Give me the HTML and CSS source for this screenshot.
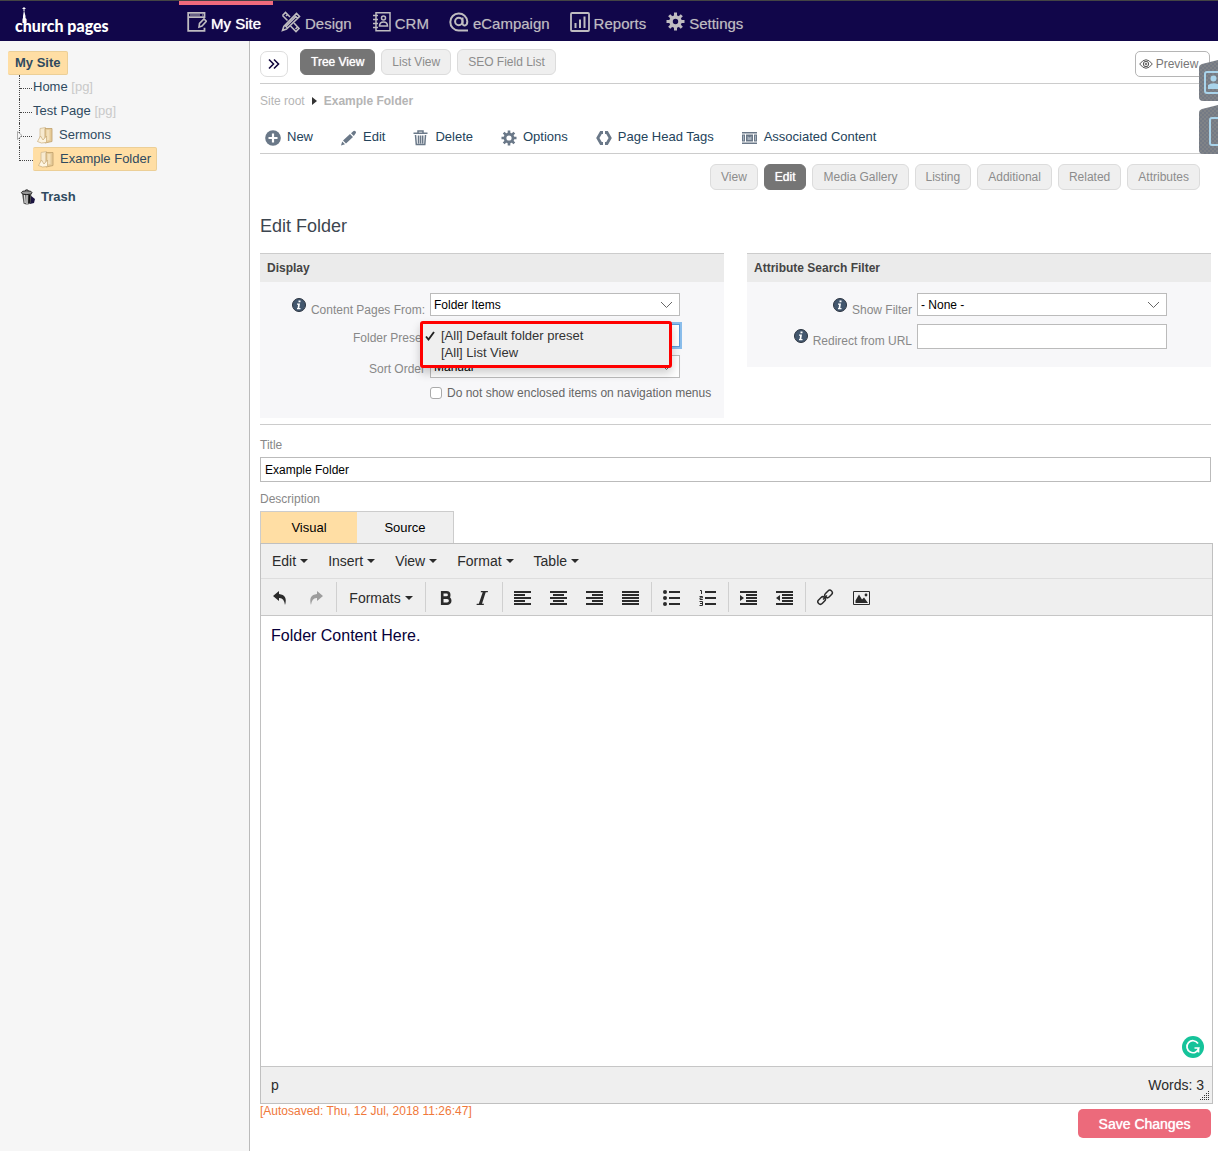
FILE: index.html
```html
<!DOCTYPE html>
<html lang="en">
<head>
<meta charset="utf-8">
<meta name="viewport" content="width=device-width, initial-scale=1">
<title>Edit Folder - Church Pages</title>
<link rel="stylesheet" href="styles.css">
</head>
<body>
<header class="topbar">
  <a class="logo" href="#">
    <svg class="steeple" width="8" height="16" viewBox="0 0 8 16"><path d="M4 0v4M2.500 1.500h3" stroke="#fff" stroke-width="1"/><path d="M4 3l1.500 6v2l1 1v4h-4v-4l.5-1V9z" fill="#fff"/></svg>
    church pages
  </a>
  <nav class="nav">
    <a class="nav-item active" href="#">
      <svg width="20" height="22" viewBox="0 0 20 22" fill="none" stroke="currentColor" stroke-width="1.800"><path d="M17.500 7V1.800H1.200v18h16.300v-3M1.200 6.200h16.300"/><path d="M3 4h10M15 4h1" stroke-width="1"/><path d="M12 16l.5-3.500L17 8l2.300 2.300L15 15z" stroke-width="1.600"/></svg>
      My Site</a>
    <a class="nav-item" href="#">
      <svg width="20" height="22" viewBox="0 0 20 22" fill="none" stroke="currentColor" stroke-width="1.600"><path d="M1.500 4.500l3-3 4.500 4.500M13 12l5 5.500-3 3L9.500 15M6.500 9.500l-5-5M5 5l1.500-1.500"/><path d="M1.500 19.500l1.300-4L15.500 2.500l3 3L5.500 18zM4 14.500l3 3M13.500 4.500l3 3M14.500 18l2-2M4.500 16l11-11"/></svg>
      Design</a>
    <a class="nav-item" href="#">
      <svg width="19" height="22" viewBox="0 0 19 22" fill="none" stroke="currentColor" stroke-width="1.500"><path d="M4 1.700h14v18H4z"/><path d="M1 4.500h5M1 8.500h5M1 12.500h5M1 16.500h5"/><circle cx="11.500" cy="7" r="2"/><path d="M7.500 15c0-5.500 8-5.500 8 0z"/></svg>
      CRM</a>
    <a class="nav-item" href="#">
      <svg width="20" height="22" viewBox="0 0 20 22" fill="none" stroke="currentColor" stroke-width="2"><path d="M19 19.500H9.500A8.500 8.500 0 1 1 18.300 10.500c0 5-4.800 4.800-4.800 2V6.500"/><circle cx="9.800" cy="10.500" r="3.700"/></svg>
      eCampaign</a>
    <a class="nav-item" href="#">
      <svg width="20" height="22" viewBox="0 0 20 22" fill="none" stroke="currentColor" stroke-width="1.800"><rect x="1" y="2" width="18" height="18" rx="1"/><path d="M5.500 17v-5M10 17V8.500M14.500 17V5.500" stroke-width="2"/></svg>
      Reports</a>
    <a class="nav-item" href="#">
      <svg width="19" height="22" viewBox="0 0 19 22" fill="none" stroke="currentColor"><circle cx="9.500" cy="10.500" r="4.500" stroke-width="3.600"/><path d="M9.500 1.500v4M9.500 15.500v4M.5 10.500h4M14.500 10.500h4M3.200 4.200L6 7M13 14l2.800 2.800M15.800 4.200L13 7M6 14l-2.800 2.800" stroke-width="3"/></svg>
      Settings</a>
  </nav>
</header>

<div class="page">
  <aside class="sidebar">
    <a class="node node-root selected" href="#">My Site</a>
    <ul class="tree">
      <li><a class="node" href="#">Home <span class="kind">[pg]</span></a></li>
      <li><a class="node" href="#">Test Page <span class="kind">[pg]</span></a></li>
      <li>
        <svg class="expander" width="6" height="9" viewBox="0 0 6 9"><path d="M.5.500L5 4.500.500 8.500z" fill="#f6f6f6" stroke="#aaa"/></svg>
        <a class="node node-folder" href="#"><svg width="17" height="17" viewBox="0 0 17 17"><path d="M3 1.500L8.500.500v12L3 14z" fill="#f7ead0" stroke="#d3bb90" stroke-width=".8"/><path d="M8 1.500h7v13l-7 1.500z" fill="#e6cb98" stroke="#bfa06a" stroke-width=".8"/><path d="M9.500 3h3v10l-3 .5z" fill="#f3e0ba"/><path d="M3.500 9L.5 14.500l4 1.500 5-.5V9L6 13z" fill="#fdf5e2" stroke="#c9ab77" stroke-width=".7"/></svg>Sermons</a>
      </li>
      <li>
        <a class="node node-folder selected" href="#"><svg width="17" height="17" viewBox="0 0 17 17"><path d="M3 1.500L8.500.500v12L3 14z" fill="#f7ead0" stroke="#d3bb90" stroke-width=".8"/><path d="M8 1.500h7v13l-7 1.500z" fill="#e6cb98" stroke="#bfa06a" stroke-width=".8"/><path d="M9.500 3h3v10l-3 .5z" fill="#f3e0ba"/><path d="M3.500 9L.5 14.500l4 1.500 5-.5V9L6 13z" fill="#fdf5e2" stroke="#c9ab77" stroke-width=".7"/></svg>Example Folder</a>
      </li>
    </ul>
    <a class="trash" href="#"><svg width="16" height="16" viewBox="0 0 16 16"><path d="M10 6l5 4-1 4-4 1z" fill="#1b1440"/><path d="M2 4l1.500 10.500q3.500 2 7 0L11.500 4z" fill="#555"/><path d="M4.500 6l.7 8M7 6v9" stroke="#ddd" stroke-width="1.300"/><path d="M9.500 6L9 14" stroke="#111" stroke-width="1.500"/><ellipse cx="6.700" cy="3.700" rx="5.300" ry="1.900" fill="#999" stroke="#222"/><path d="M5 1.500q2-1.500 3.500 0" fill="none" stroke="#222"/></svg>Trash</a>
  </aside>

  <main class="main">
    <div class="viewbar">
      <button class="box-btn expand" type="button" aria-label="Expand panel"><svg width="12" height="12" viewBox="0 0 12 12" fill="none" stroke="#11063c" stroke-width="1.600"><path d="M1 1.500L5.500 6 1 10.500M6 1.500L10.500 6 6 10.500"/></svg></button>
      <div class="pills">
        <button class="pill current" type="button">Tree View</button>
        <button class="pill" type="button">List View</button>
        <button class="pill" type="button">SEO Field List</button>
      </div>
      <button class="box-btn preview" type="button"><svg width="14" height="10" viewBox="0 0 14 10" fill="none" stroke="#555"><path d="M.7 5Q7-3.500 13.300 5 7 13.500.700 5z"/><circle cx="7" cy="5" r="2.700"/><circle cx="7" cy="5" r=".9"/></svg>Preview</button>
    </div>

    <nav class="crumbs" aria-label="Breadcrumb">
      <a href="#">Site root</a>
      <svg width="5" height="8" viewBox="0 0 5 8"><path d="M0 0l5 4-5 4z" fill="#333"/></svg>
      <a class="here" href="#">Example Folder</a>
    </nav>

    <div class="actions">
      <a href="#"><svg width="16" height="16" viewBox="0 0 16 16"><circle cx="8" cy="8" r="7.800" fill="#6a7888"/><path d="M8 3.500v9M3.500 8h9" stroke="#fff" stroke-width="2.200"/></svg>New</a>
      <a href="#"><svg width="16" height="16" viewBox="0 0 16 16" fill="#6a7888"><path d="M0 15.500l1.200-4 2.800 2.800zM2 10.500L9 4l3 3-7 6.500zM10 3.200L12.500 1q1-.7 2 .2t.2 2L12.800 6z"/></svg>Edit</a>
      <a href="#"><svg width="16" height="16" viewBox="0 0 16 16" fill="none" stroke="#6a7888" stroke-width="1.500"><path d="M.5 3.200h14M5 3V1h5v2M2.500 5l.8 9.500h8.500L12.500 5M5.500 5.500v8M7.600 5.500v8M9.700 5.500v8"/></svg>Delete</a>
      <a href="#"><svg width="16" height="16" viewBox="0 0 16 16" fill="none" stroke="#6a7888"><circle cx="8" cy="8" r="4" stroke-width="2.800"/><path d="M8 .5v3M8 12.500v3M.5 8h3M12.500 8h3M2.700 2.700l2.200 2.200M11.100 11.100l2.200 2.200M13.300 2.700l-2.200 2.200M4.900 11.100l-2.200 2.200" stroke-width="2.600"/></svg>Options</a>
      <a href="#"><svg width="16" height="16" viewBox="0 0 16 16" fill="none" stroke="#6a7888" stroke-width="2.800"><path d="M7 2.500H5L1.800 8 5 13.500h2M9 2.500h2L14.200 8 11 13.500H9"/></svg>Page Head Tags</a>
      <a href="#"><svg width="16" height="16" viewBox="0 0 16 16" fill="#6a7888"><path d="M0 2h15v1.500H0zM0 12.500h15V14H0zM0 4.500h3v7H0zM12 4.500h3v7h-3zM4 4.500h7v7H4z"/><path d="M5.500 6l2 1.500L9.500 6v4h-4zM1 5.500h1v5H1zM13 5.500h1v5h-1z" fill="#a9b3be"/></svg>Associated Content</a>
    </div>

    <div class="pills subtabs">
      <button class="pill" type="button">View</button>
      <button class="pill current" type="button">Edit</button>
      <button class="pill" type="button">Media Gallery</button>
      <button class="pill" type="button">Listing</button>
      <button class="pill" type="button">Additional</button>
      <button class="pill" type="button">Related</button>
      <button class="pill" type="button">Attributes</button>
    </div>

    <h1 class="heading">Edit Folder</h1>

    <div class="panels">
      <section class="panel">
        <h2>Display</h2>
        <div class="fields">
          <div class="field">
            <label class="with-info" for="pages-from"><svg width="14" height="14" viewBox="0 0 14 14"><circle cx="7" cy="7" r="6.500" fill="#43576e" stroke="#2c3440"/><path d="M6.500 2.500h2v1.800h-2zM5 5.500h3L7.300 10h1.200v1.200H5V10h.6l.5-3.200H5z" fill="#fff"/></svg><span>Content Pages From:</span></label>
            <div class="select"><select id="pages-from"><option>Folder Items</option></select><svg width="13" height="8" viewBox="0 0 13 8"><path d="M1 1l5.500 5.500L12 1" fill="none" stroke="#666"/></svg></div>
          </div>
          <div class="field">
            <label for="preset"><span>Folder Preset</span></label>
            <div class="select open"><select id="preset"><option>[All] Default folder preset</option><option>[All] List View</option></select><svg width="13" height="8" viewBox="0 0 13 8"><path d="M1 1l5.500 5.500L12 1" fill="none" stroke="#666"/></svg>
              <ul class="menu" role="listbox" aria-label="Folder Preset">
                <li role="option" aria-selected="true"><svg width="10" height="10" viewBox="0 0 10 10"><path d="M1 5.500L3.500 8.500 9 1" fill="none" stroke="#222" stroke-width="1.900"/></svg>[All] Default folder preset</li>
                <li role="option" aria-selected="false">[All] List View</li>
              </ul>
            </div>
          </div>
          <div class="field">
            <label for="sort"><span>Sort Order</span></label>
            <div class="select"><select id="sort"><option>Manual</option></select><svg width="13" height="8" viewBox="0 0 13 8"><path d="M1 1l5.500 5.500L12 1" fill="none" stroke="#666"/></svg></div>
          </div>
          <label class="check"><input type="checkbox">Do not show enclosed items on navigation menus</label>
        </div>
      </section>

      <section class="panel">
        <h2>Attribute Search Filter</h2>
        <div class="fields">
          <div class="field">
            <label class="with-info" for="filter"><svg width="14" height="14" viewBox="0 0 14 14"><circle cx="7" cy="7" r="6.500" fill="#43576e" stroke="#2c3440"/><path d="M6.500 2.500h2v1.800h-2zM5 5.500h3L7.300 10h1.200v1.200H5V10h.6l.5-3.200H5z" fill="#fff"/></svg><span>Show Filter</span></label>
            <div class="select"><select id="filter"><option>- None -</option></select><svg width="13" height="8" viewBox="0 0 13 8"><path d="M1 1l5.500 5.500L12 1" fill="none" stroke="#666"/></svg></div>
          </div>
          <div class="field">
            <label class="with-info" for="redirect"><svg width="14" height="14" viewBox="0 0 14 14"><circle cx="7" cy="7" r="6.500" fill="#43576e" stroke="#2c3440"/><path d="M6.500 2.500h2v1.800h-2zM5 5.500h3L7.300 10h1.200v1.200H5V10h.6l.5-3.200H5z" fill="#fff"/></svg><span>Redirect from URL</span></label>
            <input class="text" id="redirect" type="text">
          </div>
        </div>
      </section>
    </div>

    <div class="title-block">
      <label for="title">Title</label>
      <input class="text" id="title" type="text" value="Example Folder">
    </div>

    <label class="desc-label" for="body">Description</label>
    <div class="mode-tabs">
      <button class="on" type="button">Visual</button>
      <button type="button">Source</button>
    </div>
    <div class="editor">
      <div class="menubar">
        <button type="button">Edit<i class="caret"></i></button>
        <button type="button">Insert<i class="caret"></i></button>
        <button type="button">View<i class="caret"></i></button>
        <button type="button">Format<i class="caret"></i></button>
        <button type="button">Table<i class="caret"></i></button>
      </div>
      <div class="toolbar">
        <div class="group">
          <button type="button" aria-label="Undo"><svg width="16" height="16" viewBox="0 0 16 16"><path d="M7 1L1 6l6 5V8q5-.5 6 7 3-10-6-11z" fill="#2b2b2b"/></svg></button>
          <button type="button" aria-label="Redo"><svg width="16" height="16" viewBox="0 0 16 16"><path d="M9 1l6 5-6 5V8q-5-.5-6 7Q0 5 9 4z" fill="#9d9d9d"/></svg></button>
        </div>
        <div class="group"><button class="wide" type="button">Formats<i class="caret"></i></button></div>
        <div class="group">
          <button type="button" aria-label="Bold"><svg width="16" height="16" viewBox="0 0 16 16" fill="none" stroke="#2b2b2b" stroke-width="2.600"><path d="M4.200 2.200h4.300a2.700 2.700 0 0 1 0 5.400H4.200zM4.200 7.600h4.900a3 3 0 0 1 0 6.200H4.200z"/></svg></button>
          <button type="button" aria-label="Italic"><svg width="16" height="16" viewBox="0 0 16 16"><path d="M7 1h7l-.3 1.300h-2L8 13.700h2L9.700 15H2.500l.3-1.300h2L8.700 2.300h-2z" fill="#2b2b2b"/></svg></button>
        </div>
        <div class="group">
          <button type="button" aria-label="Align left"><svg width="18" height="14" viewBox="0 0 18 14"><path d="M0 0h17v2H0zM0 3h11v2H0zM0 6h17v2H0zM0 9h11v2H0zM0 12h17v2H0z" fill="#2b2b2b"/></svg></button>
          <button type="button" aria-label="Align center"><svg width="18" height="14" viewBox="0 0 18 14"><path d="M0 0h17v2H0zM3 3h11v2H3zM0 6h17v2H0zM3 9h11v2H3zM0 12h17v2H0z" fill="#2b2b2b"/></svg></button>
          <button type="button" aria-label="Align right"><svg width="18" height="14" viewBox="0 0 18 14"><path d="M0 0h17v2H0zM6 3h11v2H6zM0 6h17v2H0zM6 9h11v2H6zM0 12h17v2H0z" fill="#2b2b2b"/></svg></button>
          <button type="button" aria-label="Justify"><svg width="18" height="14" viewBox="0 0 18 14"><path d="M0 0h17v2H0zM0 3h17v2H0zM0 6h17v2H0zM0 9h17v2H0zM0 12h17v2H0z" fill="#2b2b2b"/></svg></button>
        </div>
        <div class="group">
          <button type="button" aria-label="Bullet list"><svg width="18" height="16" viewBox="0 0 18 16" fill="#2b2b2b"><circle cx="2" cy="2" r="2"/><circle cx="2" cy="8" r="2"/><circle cx="2" cy="14" r="2"/><path d="M6 1h11v2H6zM6 7h11v2H6zM6 13h11v2H6z"/></svg></button>
          <button type="button" aria-label="Numbered list"><svg width="18" height="16" viewBox="0 0 18 16"><path d="M6 1h11v2H6zM6 7h11v2H6zM6 13h11v2H6z" fill="#2b2b2b"/><path d="M1 .5h1.500V4M.5 6.500h3v1.300h-2.500v1.700h2.800M.5 11.500h3v4h-3M1 13.500h2.500" fill="none" stroke="#2b2b2b"/></svg></button>
        </div>
        <div class="group">
          <button type="button" aria-label="Increase indent"><svg width="18" height="14" viewBox="0 0 18 14"><path d="M0 0h17v2H0zM6 3h11v2H6zM6 6h11v2H6zM6 9h11v2H6zM0 12h17v2H0zM0 4l4 3-4 3z" fill="#2b2b2b"/></svg></button>
          <button type="button" aria-label="Decrease indent"><svg width="18" height="14" viewBox="0 0 18 14"><path d="M0 0h17v2H0zM6 3h11v2H6zM6 6h11v2H6zM6 9h11v2H6zM0 12h17v2H0zM4 4L0 7l4 3z" fill="#2b2b2b"/></svg></button>
        </div>
        <div class="group">
          <button type="button" aria-label="Insert link"><svg width="18" height="17" viewBox="0 0 18 17" fill="none" stroke="#2b2b2b" stroke-width="1.500"><rect x="-3.800" y="-2.500" width="8.500" height="5" rx="2.500" transform="translate(4.300 11.800) rotate(-45)"/><rect x="-4.200" y="-2.500" width="8.500" height="5" rx="2.500" transform="translate(11.500 5) rotate(-45)"/><path d="M6 10.500l4-4"/></svg></button>
          <button type="button" aria-label="Insert image"><svg width="18" height="14" viewBox="0 0 18 14"><path d="M.5.500h16v13H.5z" fill="none" stroke="#2b2b2b"/><path d="M2.500 12V9.500L6 3.500l3 5L11 6.500l4 5.500z" fill="#2b2b2b"/><circle cx="13" cy="4" r="1.400" fill="#2b2b2b"/></svg></button>
        </div>
      </div>
      <div class="canvas">
        <textarea id="body">Folder Content Here.</textarea>
        <svg class="assistant" width="22" height="22" viewBox="0 0 22 22"><circle cx="11" cy="11" r="11" fill="#15c39a"/><path d="M16 7.500a6 6 0 1 0 .8 4.500H12.500M16.500 12v4.500" fill="none" stroke="#fff" stroke-width="1.700"/></svg>
      </div>
      <div class="status">
        <span>p</span><span>Words: 3</span>
        <svg class="grip" width="10" height="10" viewBox="0 0 10 10"><path d="M8 0h1v1H8zM6 2h1v1H6zM8 2h1v1H8zM4 4h1v1H4zM6 4h1v1H6zM8 4h1v1H8zM2 6h1v1H2zM4 6h1v1H4zM6 6h1v1H6zM8 6h1v1H8zM0 8h1v1H0zM2 8h1v1H2zM4 8h1v1H4zM6 8h1v1H6zM8 8h1v1H8z" fill="#333"/></svg>
      </div>
    </div>

    <div class="footer">
      <span class="autosaved">[Autosaved: Thu, 12 Jul, 2018 11:26:47]</span>
      <button class="save" type="button">Save Changes</button>
    </div>
  </main>
</div>

<div class="drawer">
  <button type="button" aria-label="Images"><svg width="19" height="41" viewBox="0 0 19 41"><defs><pattern id="mesh" width="4" height="4" patternUnits="userSpaceOnUse"><rect width="4" height="4" fill="#747a85"/><path d="M0 0l4 4M4 0L0 4" stroke="#858688" stroke-width=".7"/></pattern></defs><path d="M19 0L3 4Q0 5 0 8v29q0 4 4 4h15z" fill="url(#mesh)"/><path d="M19 12H8q-2 0-2 2v17q0 2 2 2h11" fill="none" stroke="#a9d3ea" stroke-width="2"/><circle cx="14.500" cy="18.500" r="3" fill="#a9d3ea"/><path d="M9 25q4-3 10-1v5H9z" fill="#a9d3ea"/></svg></button>
  <button type="button" aria-label="Documents"><svg width="19" height="49" viewBox="0 0 19 49"><path d="M19 0L3 4Q0 5 0 8v37q0 4 4 4h15z" fill="url(#mesh)"/><path d="M19 13h-6q-2 0-2 2v23q0 2 2 2h6" fill="none" stroke="#a9d3ea" stroke-width="2"/></svg></button>
</div>
</body>
</html>
```
FILE: styles.css
```css
* { box-sizing: border-box; }

body {
  margin: 0;
  min-height: 100vh;
  display: flex;
  flex-direction: column;
  font: 12px/16px "Liberation Sans", Arial, sans-serif;
  color: #555;
  background: #fff;
}

a { color: inherit; text-decoration: none; }
button, input, select, textarea { font: inherit; color: inherit; margin: 0; }
button { cursor: pointer; }
ul { list-style: none; margin: 0; padding: 0; }
svg { display: block; flex: none; }

/* Top bar */
.topbar {
  display: flex;
  height: 41px;
  background: #11064a;
  border-top: 1px solid #444;
}
.logo {
  position: relative;
  width: 179px;
  padding: 15px 0 0 15px;
  font: 900 16px/20px Lato, sans-serif;
  color: #fff;
}
.steeple { position: absolute; left: 20px; top: 6px; }
.nav { display: flex; }
.nav-item {
  display: flex;
  align-items: center;
  gap: 4px;
  padding: 5px 12px 0 8px;
  font-size: 15px;
  line-height: 38px;
  color: #bfbcc0;
  text-shadow: 0 0 1px #bfbcc080;
}
.nav-item svg { margin-bottom: 4px; }
.nav-item.active {
  padding-top: 1px;
  border-top: 4px solid #ef6a7c;
  color: #fff;
  text-shadow: 0 0 1px #fff;
}
.nav-item.active svg { color: #bfbcc0; }

/* Page frame */
.page { flex: 1; display: flex; }
.sidebar {
  flex: none;
  width: 250px;
  padding: 10px 8px;
  background: #f6f6f6;
  border-right: 1px solid #bbb;
  font-size: 13px;
  line-height: 22px;
  color: #2f4a60;
}
.node { display: block; width: fit-content; height: 24px; border: 1px solid transparent; border-left-width: 0; white-space: pre; }
.node-root { padding: 0 6px 0 7px; font-weight: bold; }
.node.selected { background: #ffdea4; border-color: #eccf97; border-radius: 2px; }
.tree { margin-left: 11px; }
.tree li { position: relative; display: flex; height: 24px; border-left: 1px dotted #444; }
.tree li::before { content: ""; width: 12px; height: 13px; border-bottom: 1px dotted #444; }
.tree li:last-child { border-left: 0; }
.tree li:last-child::before { width: 13px; border-left: 1px dotted #444; }
.tree .node { padding-left: 1px; }
.tree .node-folder { display: flex; align-items: center; gap: 5px; padding: 0 5px; }
.expander { position: absolute; left: -3px; top: 8px; }
.kind { color: #c9c9c9; }
.trash { display: flex; align-items: center; gap: 5px; margin: 15px 0 0 12px; font-weight: bold; }

.main {
  flex: 1;
  min-width: 0;
  display: flex;
  flex-direction: column;
  padding: 8px 7px 13px 10px;
}

/* View switcher */
.viewbar {
  display: flex;
  align-items: flex-start;
  height: 35px;
  border-bottom: 1px solid #ccc;
}
.pills { display: flex; gap: 6px; }
.pill {
  height: 26px;
  padding: 0 10px;
  border: 1px solid #dcdcdc;
  border-radius: 6px;
  background: #efefef;
  color: #8c8c8c;
}
.pill.current {
  background: #757575;
  border-color: #757575;
  color: #fff;
  text-shadow: 0 0 1px #fff;
}
.box-btn {
  display: flex;
  align-items: center;
  justify-content: center;
  height: 26px;
  margin-top: 2px;
  padding: 0;
  background: #fff;
  border: 1px solid #ddd;
  border-radius: 7px;
}
.expand { width: 28px; margin-right: 12px; }
.preview { width: 75px; gap: 3px; margin-left: auto; margin-right: 1px; padding-right: 8px; border-color: #b5b5b5; border-radius: 5px; color: #777; }

.crumbs { display: flex; align-items: center; gap: 7px; height: 34px; color: #b5b5b5; }
.here { font-weight: bold; }

.actions {
  display: flex;
  gap: 28px;
  height: 36px;
  padding: 2px 0 0 5px;
  border-bottom: 1px solid #ccc;
  font-size: 13px;
  color: #24435b;
}
.actions a { display: flex; align-items: center; gap: 6px; }
.actions svg { margin-top: 2px; }

.subtabs { justify-content: flex-end; margin: 10px 11px 0 0; }

.heading { margin: 25px 0 0; font-size: 18px; line-height: 22px; font-weight: normal; color: #3d4650; }

/* Settings panels */
.panels {
  display: grid;
  grid-template-columns: 1fr 1fr;
  align-items: start;
  gap: 23px;
  margin-top: 16px;
  padding-bottom: 6px;
  border-bottom: 1px solid #ccc;
}
.panel { background: #f7f7f9; border-top: 1px solid #ccc; }
.panel h2 { margin: 0; padding: 0 7px; font-size: 12px; line-height: 28px; color: #444; background: #ebebeb; }
.fields { display: flex; flex-direction: column; gap: 8px; padding: 11px 0 18px; }
.field { display: grid; grid-template-columns: 165px 250px; gap: 5px; }
.field label { display: flex; justify-content: flex-end; align-items: center; gap: 5px; height: 23px; color: #888; }
.field label span { padding-top: 4px; }
.field .with-info span { padding-top: 10px; }
.select { position: relative; }
.select select {
  display: block;
  width: 100%;
  height: 23px;
  padding: 0 3px;
  appearance: none;
  border: 1px solid #bbb;
  border-radius: 0;
  background: #fff;
  color: #000;
}
.select > svg { position: absolute; right: 7px; top: 8px; pointer-events: none; }
.select.open select { border-color: #5b9dd9; box-shadow: 0 0 0 2px #8abdeb; }
.menu {
  position: absolute;
  z-index: 2;
  left: -10px;
  top: -3px;
  width: 252px;
  padding: 3px 0 4px;
  border: 3px solid #f00;
  border-radius: 3px;
  background: #efefef;
  box-shadow: 0 5px 10px #0003;
  font-size: 13px;
  line-height: 17px;
  color: #333;
}
.menu li { padding-left: 18px; }
.menu svg { float: left; margin: 4px 0 0 -16px; }
.check { display: flex; align-items: center; gap: 5px; height: 14px; margin-left: 170px; color: #666; white-space: nowrap; }
.check input { width: 12px; height: 12px; appearance: none; border: 1px solid #aaa; border-radius: 3px; background: #fff; }
.text { width: 100%; height: 25px; padding: 0 4px; border: 1px solid #bbb; background: #fff; color: #000; }

.title-block { padding-top: 12px; }
.title-block label, .desc-label { display: block; color: #888; }
.title-block label { margin-bottom: 4px; }
.desc-label { margin: 9px 0 4px; }

/* Rich text editor */
.mode-tabs { display: flex; height: 32px; }
.mode-tabs button {
  width: 97px;
  padding: 0;
  border: 1px solid #ccc;
  border-width: 1px 1px 0 0;
  background: #efefef;
  font-size: 13px;
  color: #000;
}
.mode-tabs .on { border-width: 1px 0 0 1px; background: #ffdea4; }
.editor {
  flex: 1;
  display: flex;
  flex-direction: column;
  min-height: 300px;
  margin-right: -2px;
  border: 1px solid #c0c0c0;
  font-size: 14px;
  color: #2b2b2b;
}
.menubar, .toolbar, .status { display: flex; background: #efefef; }
.menubar { height: 35px; padding-left: 1px; border-bottom: 1px solid #ddd; }
.menubar button, .toolbar button {
  display: flex;
  align-items: center;
  justify-content: center;
  gap: 4px;
  padding: 0 10px;
  border: 0;
  background: none;
}
.caret { border: 4px solid transparent; border-top-color: #2b2b2b; border-bottom: 0; }
.toolbar { height: 37px; padding-top: 3px; border-bottom: 1px solid #c6c6c6; }
.group { display: flex; height: 30px; padding: 1px 2px 0; border-left: 1px solid #d0d0d0; }
.group:first-child { border-left: 0; padding-left: 1px; }
.toolbar button { width: 36px; padding: 0; }
.toolbar .wide { width: 84px; }
.canvas { position: relative; flex: 1; display: flex; }
.canvas textarea {
  flex: 1;
  padding: 10px;
  border: 0;
  outline: 0;
  resize: none;
  font-size: 16px;
  line-height: 20px;
  color: #07003a;
}
.assistant { position: absolute; right: 8px; bottom: 8px; }
.status { position: relative; justify-content: space-between; height: 37px; padding: 0 8px 0 10px; border-top: 1px solid #c6c6c6; line-height: 36px; }
.grip { position: absolute; right: 2px; bottom: 2px; }

.footer { display: flex; justify-content: space-between; align-items: flex-start; }
.autosaved { line-height: 14px; color: #f0783a; }
.save {
  width: 133px;
  height: 29px;
  margin-top: 5px;
  padding: 0;
  border: 0;
  border-radius: 5px;
  background: #ec6a7b;
  color: #fff;
  font-size: 14px;
  text-shadow: 0 0 1px #fff;
}

/* Pull-out drawers on the window edge */
.drawer { position: fixed; z-index: 3; right: 0; top: 60px; display: flex; flex-direction: column; gap: 4px; }
.drawer button { padding: 0; border: 0; background: none; }
```
